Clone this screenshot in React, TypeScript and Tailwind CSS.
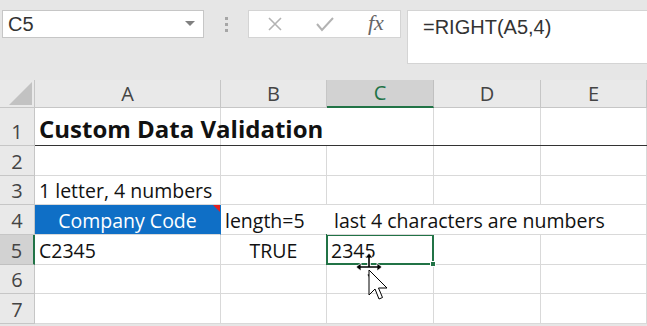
import React from "react";

const cols = ["A", "B", "C", "D", "E"];
const colW = ["w-[186px]", "w-[106px]", "w-[107px]", "w-[107px]", "w-[106px]"];
const rowH = ["h-[38px]", "h-[30px]", "h-[29px]", "h-[30px]", "h-[30px]", "h-[29px]", "h-[30px]"];

const Cell = ({ i, className = "", children }: { i: number; className?: string; children?: React.ReactNode }) => (
  <div className={`${colW[i]} shrink-0 border-r border-b border-[#d9d9d9] flex items-end px-[4px] leading-[26px] whitespace-nowrap ${className}`}>
    {children}
  </div>
);

const RowHead = ({ n, active = false }: { n: number; active?: boolean }) => (
  <div
    className={`w-[35px] shrink-0 flex items-end justify-center leading-[26px] text-[20px] border-b border-r text-[#444] ${
      active ? "bg-[#d2d2d2] border-r-2 border-r-[#217346] border-b-[#c0c0c0]" : "bg-[#e9e9e9] border-[#c6c6c6]"
    }`}
  >
    {n}
  </div>
);

export default function App() {
  return (
    <div className="w-[647px] h-[326px] overflow-hidden bg-[#e6e6e6] relative font-['Open_Sans',sans-serif] text-[19.5px] text-[#111]">
      {/* formula bar */}
      <div className="h-[80px] flex items-start pt-[10px] pl-[2px]">
        <div className="w-[202px] h-[28px] bg-white border border-[#c6c6c6] flex items-center justify-between pl-[5px] pr-[8px] font-['Liberation_Sans',sans-serif] text-[20px] text-[#333]">
          <span>C5</span>
          <svg width="10" height="6" viewBox="0 0 10 6">
            <path d="M0 0h10L5 5z" fill="#808080" />
          </svg>
        </div>
        <div className="w-[44px] h-[28px] flex flex-col items-center justify-center gap-[3px]">
          <span className="w-[3px] h-[3px] bg-[#a6a6a6]" />
          <span className="w-[3px] h-[3px] bg-[#a6a6a6]" />
          <span className="w-[3px] h-[3px] bg-[#a6a6a6]" />
        </div>
        <div className="w-[153px] h-[28px] bg-white border border-[#d4d4d4] flex items-center">
          <svg className="ml-[18px]" width="16" height="16" viewBox="0 0 16 16">
            <path d="M2 2l12 12M14 2L2 14" stroke="#b3b3b3" strokeWidth="1.6" />
          </svg>
          <svg className="ml-[32px]" width="20" height="16" viewBox="0 0 20 16">
            <path d="M2 8l5 6L18 2" stroke="#b3b3b3" strokeWidth="2" fill="none" />
          </svg>
          <span className="ml-[33px] font-['Liberation_Serif',serif] italic text-[22px] text-[#666] leading-none -mt-[2px]">fx</span>
        </div>
        <div className="ml-[6px] w-[240px] h-[54px] bg-white border border-[#d4d4d4] border-r-0 pl-[15px] pt-[1px] font-['Liberation_Sans',sans-serif] text-[20px] text-[#333]">
          =RIGHT(A5,4)
        </div>
      </div>

      {/* column headers */}
      <div className="flex h-[28px] text-[#444] text-[20px]">
        <div className="w-[35px] shrink-0 bg-[#e9e9e9] border-r border-b border-[#c6c6c6] relative">
          <svg className="absolute left-[9px] top-[2px]" width="23" height="23" viewBox="0 0 23 23">
            <path d="M23 0V23H0z" fill="#c2c2c2" />
          </svg>
        </div>
        {cols.map((c, i) => (
          <div
            key={c}
            className={`${colW[i]} shrink-0 flex items-center justify-center border-r ${
              c === "C"
                ? "bg-[#d2d2d2] border-b-2 border-b-[#217346] border-r-[#c0c0c0] text-[#217346]"
                : "bg-[#e9e9e9] border-b border-[#c6c6c6]"
            }`}
          >
            {c}
          </div>
        ))}
      </div>

      {/* rows */}
      <div className="bg-white">
        <div className={`flex ${rowH[0]}`}>
          <RowHead n={1} />
          <div className="flex border-b border-[#333]">
            <Cell i={0} className="font-bold text-[24px] leading-[32px] overflow-visible border-b-0 relative z-10">
              Custom Data Validation
            </Cell>
            <Cell i={1} className="border-b-0 border-r-0" />
            <Cell i={2} className="border-b-0" />
            <Cell i={3} className="border-b-0" />
            <Cell i={4} className="border-b-0" />
          </div>
        </div>
        <div className={`flex ${rowH[1]}`}>
          <RowHead n={2} />
          {cols.map((c, i) => (
            <Cell key={c} i={i} />
          ))}
        </div>
        <div className={`flex ${rowH[2]}`}>
          <RowHead n={3} />
          <Cell i={0}>1 letter, 4 numbers</Cell>
          {cols.slice(1).map((c, i) => (
            <Cell key={c} i={i + 1} />
          ))}
        </div>
        <div className={`flex ${rowH[3]}`}>
          <RowHead n={4} />
          <Cell i={0} className="bg-[#0f6fc6] text-white justify-center relative border-r-[#0f6fc6]">
            Company Code
            <svg className="absolute right-0 top-0" width="7" height="7" viewBox="0 0 7 7">
              <path d="M0 0h7v7z" fill="#e52020" />
            </svg>
          </Cell>
          <Cell i={1} className="border-r-0">length=5</Cell>
          <Cell i={2} className="pl-[7px] border-r-0 overflow-visible relative z-10">
            last 4 characters are numbers
          </Cell>
          <Cell i={3} className="border-r-0" />
          <Cell i={4} />
        </div>
        <div className={`flex ${rowH[4]}`}>
          <RowHead n={5} active />
          <Cell i={0}>C2345</Cell>
          <Cell i={1} className="justify-center">TRUE</Cell>
          <Cell i={2} className="relative">
            2345
            <div className="absolute -left-[1px] -top-[1px] w-[108px] h-[31px] border-2 border-[#217346]" />
            <div className="absolute -right-[3px] -bottom-[3px] w-[6px] h-[6px] bg-[#217346] border border-white" />
          </Cell>
          <Cell i={3} />
          <Cell i={4} />
        </div>
        <div className={`flex ${rowH[5]}`}>
          <RowHead n={6} />
          {cols.map((c, i) => (
            <Cell key={c} i={i} />
          ))}
        </div>
        <div className={`flex ${rowH[6]}`}>
          <RowHead n={7} />
          {cols.map((c, i) => (
            <Cell key={c} i={i} />
          ))}
        </div>
      </div>

      {/* mouse cursor */}
      <svg className="absolute left-[350px] top-[248px] z-20" width="45" height="54" viewBox="0 0 45 54">
        <g stroke="#fff" strokeWidth="3.5" strokeLinecap="square">
          <path d="M9 19h20M19 8v10" />
        </g>
        <g fill="#000" stroke="#fff" strokeWidth="0.8">
          <path d="M6 19l5-4v8z" />
          <path d="M32 19l-5-4v8z" />
          <path d="M19 5l-4 5h8z" />
          <path d="M17 26l2 4 2-4z" />
        </g>
        <path d="M9 19h20M19 8v11" stroke="#000" strokeWidth="1.6" />
        <path d="M19 22v25l6-6 4 10 3.5-1.5-4-9.5h8.5z" fill="#fff" stroke="#000" strokeWidth="1" strokeLinejoin="round" />
      </svg>
    </div>
  );
}
